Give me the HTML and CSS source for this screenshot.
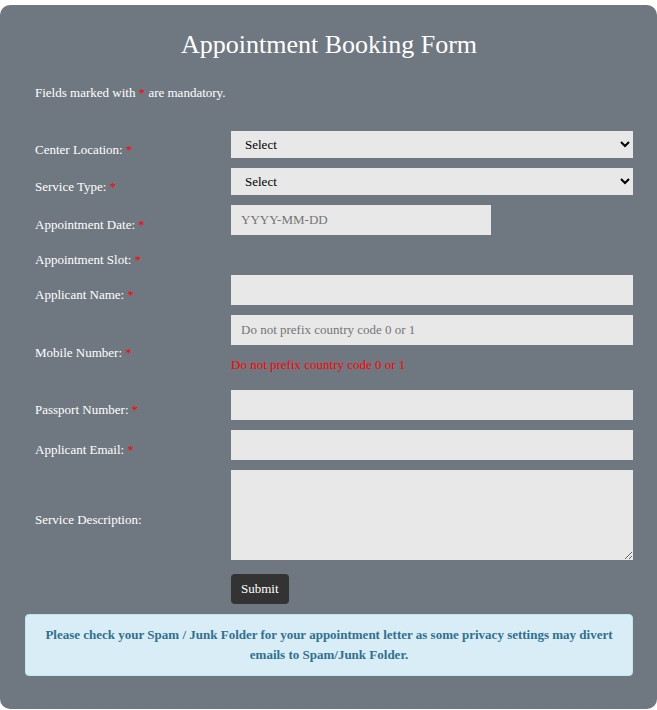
FILE: index.html
```html
<!DOCTYPE html>
<html lang="en">
<head>
    <meta charset="UTF-8">
    <meta name="viewport" content="width=device-width, initial-scale=1.0">
    <title>Appointment Booking Form</title>
    <link rel="stylesheet" href="styles.css">
</head>
<body>
    <div class="form-container">
        <h2>Appointment Booking Form</h2>
        <p class="note">Fields marked with <span class="req">*</span> are mandatory.</p>
        <form id="bookingForm">
            <div class="form-row">
                <label for="center">Center Location: <span class="req">*</span></label>
                <div class="field">
                    <select id="center" name="center" class="select-box">
                        <option>Select</option>
                    </select>
                </div>
            </div>
            <div class="form-row">
                <label for="service">Service Type: <span class="req">*</span></label>
                <div class="field">
                    <select id="service" name="service" class="select-box">
                        <option>Select</option>
                    </select>
                </div>
            </div>
            <div class="form-row">
                <label for="date">Appointment Date: <span class="req">*</span></label>
                <div class="field">
                    <input type="text" id="date" name="date" class="date-input" placeholder="YYYY-MM-DD">
                </div>
            </div>
            <div class="form-row slot-row">
                <label>Appointment Slot: <span class="req">*</span></label>
                <div class="field"></div>
            </div>
            <div class="form-row">
                <label for="name">Applicant Name: <span class="req">*</span></label>
                <div class="field">
                    <input type="text" id="name" name="name">
                </div>
            </div>
            <div class="form-row">
                <label for="mobile">Mobile Number: <span class="req">*</span></label>
                <div class="field">
                    <input type="text" id="mobile" name="mobile" placeholder="Do not prefix country code 0 or 1">
                    <div class="error-text">Do not prefix country code 0 or 1</div>
                </div>
            </div>
            <div class="form-row">
                <label for="passport">Passport Number: <span class="req">*</span></label>
                <div class="field">
                    <input type="text" id="passport" name="passport">
                </div>
            </div>
            <div class="form-row">
                <label for="email">Applicant Email: <span class="req">*</span></label>
                <div class="field">
                    <input type="text" id="email" name="email">
                </div>
            </div>
            <div class="form-row">
                <label for="desc">Service Description:</label>
                <div class="field">
                    <textarea id="desc" name="desc"></textarea>
                </div>
            </div>
            <div class="form-row">
                <span></span>
                <div class="field">
                    <button type="submit">Submit</button>
                </div>
            </div>
        </form>
        <div class="alert-info">
            Please check your Spam / Junk Folder for your appointment letter as some privacy settings may divert emails to Spam/Junk Folder.
        </div>
    </div>
</body>
</html>
```

FILE: styles.css
```css
body {
    font-family: "Liberation Serif", "Times New Roman", serif;
    background-color: #ffffff;
    margin: 0;
}
.form-container {
    margin-top: 5px;
    background-color: #6f7881;
    border-radius: 10px;
    padding: 25px 24px 33px 25px;
    color: #ffffff;
}
h2 {
    margin: 0;
    font-size: 26px;
    line-height: 30px;
    font-weight: normal;
    text-align: center;
}
.note {
    margin: 25px 0 31px 0;
    padding-left: 10px;
    font-size: 13px;
    line-height: 15px;
}
.req {
    color: #ff0000;
}
.form-row {
    display: grid;
    grid-template-columns: 206px 1fr;
    align-items: center;
}
.form-row label {
    padding-left: 10px;
    font-size: 13px;
}
.slot-row {
    height: 30px;
}
.field input,
.field select,
.field textarea {
    display: block;
    width: 100%;
    box-sizing: border-box;
    margin: 0 0 10px 0;
    border: none;
    background-color: #e8e8e8;
    font-family: "Liberation Serif", "Times New Roman", serif;
    font-size: 13px;
    color: #000000;
    padding: 0 10px;
    border-radius: 0;
}
.field input {
    height: 30px;
}
.field input::placeholder {
    color: #757575;
}
.field select {
    height: 27px;
}
.field .date-input {
    width: 260px;
}
.field textarea {
    height: 90px;
    padding: 8px 10px;
}
.error-text {
    color: #ff0000;
    font-size: 13px;
    line-height: 20px;
    margin-bottom: 15px;
}
button {
    margin-top: 4px;
    height: 30px;
    padding: 0 10px;
    background-color: #333333;
    border: none;
    border-radius: 4px;
    color: #ffffff;
    font-family: "Liberation Serif", "Times New Roman", serif;
    font-size: 13px;
    cursor: pointer;
}
.alert-info {
    margin-top: 10px;
    padding: 10px 15px;
    background-color: #d9edf7;
    border: 1px solid #bce8f1;
    border-radius: 4px;
    color: #31708f;
    font-size: 13px;
    font-weight: bold;
    line-height: 20px;
    text-align: center;
}
```
